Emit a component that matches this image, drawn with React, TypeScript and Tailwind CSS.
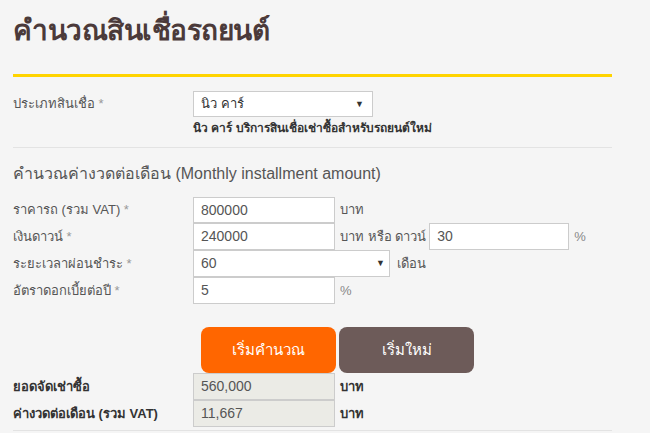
import React from "react";

const font = { fontFamily: '"Liberation Sans", "Noto Sans", "DejaVu Sans", sans-serif' };

function Caret() {
  return <span className="text-[9px] text-[#333] leading-none">▼</span>;
}

function Star() {
  return <span className="text-[#999]"> *</span>;
}

export default function App() {
  return (
    <div className="w-[650px] h-[433px] overflow-hidden bg-[#f5f5f5] text-[#555]" style={font}>
      <div className="pl-[13px] w-[612px]">
        <h1 className="pt-[13px] h-[74px] text-[28px] leading-[36px] text-[#4b3a3a] font-semibold tracking-[-0.5px]">คำนวณสินเชื่อรถยนต์</h1>
        <div className="h-[3px] bg-[#ffd400]" />
        <div className="flex pt-[14px]">
          <div className="w-[180px] text-[13px] leading-[26px]">ประเภทสินเชื่อ<Star /></div>
          <div className="flex flex-col">
            <div className="w-[180px] h-[26px] bg-white border border-[#ccc] flex items-center justify-between pl-[7px] pr-[8px] text-[13px] text-[#333]">
              <span>นิว คาร์</span>
              <Caret />
            </div>
            <div className="text-[12px] font-bold text-[#333] leading-[22px]">นิว คาร์ บริการสินเชื่อเช่าซื้อสำหรับรถยนต์ใหม่</div>
          </div>
        </div>
        <div className="mt-[8px] h-px bg-[#e3e3e3]" />
        <div className="pt-[15px] h-[49px] text-[16px] leading-[22px] text-[#555]">คำนวณค่างวดต่อเดือน (Monthly installment amount)</div>
        <div className="flex flex-col text-[13px]">
          <div className="flex items-center h-[26px]">
            <div className="w-[180px]">ราคารถ (รวม VAT)<Star /></div>
            <div className="w-[142px] h-[26px] bg-white border border-[#ccc] flex items-center pl-[7px] text-[14px]">800000</div>
            <span className="ml-[5px]">บาท</span>
          </div>
          <div className="flex items-center h-[27px]">
            <div className="w-[180px]">เงินดาวน์<Star /></div>
            <div className="w-[142px] h-[27px] bg-white border border-[#ccc] flex items-center pl-[7px] text-[14px]">240000</div>
            <span className="ml-[5px]">บาท หรือ ดาวน์</span>
            <div className="ml-[3px] w-[140px] h-[27px] bg-white border border-[#ccc] flex items-center pl-[7px] text-[14px]">30</div>
            <span className="ml-[5px] text-[#888]">%</span>
          </div>
          <div className="flex items-center h-[27px]">
            <div className="w-[180px]">ระยะเวลาผ่อนชำระ<Star /></div>
            <div className="w-[197px] h-[27px] bg-white border border-[#ccc] flex items-center justify-between pl-[7px] pr-[4px] text-[14px]">
              <span>60</span>
              <Caret />
            </div>
            <span className="ml-[7px]">เดือน</span>
          </div>
          <div className="flex items-center h-[27px]">
            <div className="w-[180px]">อัตราดอกเบี้ยต่อปี<Star /></div>
            <div className="w-[142px] h-[27px] bg-white border border-[#ccc] flex items-center pl-[7px] text-[14px]">5</div>
            <span className="ml-[5px] text-[#888]">%</span>
          </div>
        </div>
        <div className="flex pl-[188px] gap-[3px] mt-[23px]">
          <button className="w-[135px] h-[46px] rounded-[8px] bg-[#ff6600] text-white text-[15px]">เริ่มคำนวณ</button>
          <button className="w-[135px] h-[46px] rounded-[8px] bg-[#6d5b59] text-white text-[15px]">เริ่มใหม่</button>
        </div>
        <div className="flex flex-col text-[13px]">
          <div className="flex items-center h-[27px]">
            <div className="w-[180px] font-bold text-[#333]">ยอดจัดเช่าซื้อ</div>
            <div className="w-[142px] h-[27px] bg-[#ebebe6] border border-[#ccc] flex items-center pl-[7px] text-[14px]">560,000</div>
            <span className="ml-[5px] font-bold text-[#333]">บาท</span>
          </div>
          <div className="flex items-center h-[27px]">
            <div className="w-[180px] font-bold text-[#333]">ค่างวดต่อเดือน (รวม VAT)</div>
            <div className="w-[142px] h-[27px] bg-[#ebebe6] border border-[#ccc] flex items-center pl-[7px] text-[14px]">11,667</div>
            <span className="ml-[5px] font-bold text-[#333]">บาท</span>
          </div>
        </div>
        <div className="mt-[3px] h-px bg-[#e3e3e3]" />
      </div>
    </div>
  );
}
